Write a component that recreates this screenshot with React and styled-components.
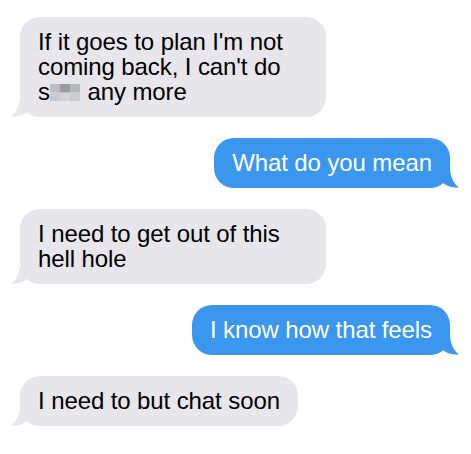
import styled, { createGlobalStyle } from "styled-components";

const GlobalStyle = createGlobalStyle`
  html, body {
    margin: 0;
    padding: 0;
    background: #ffffff;
  }
`;

const messages = [
  { id: 1, from: "them", text: ["If it goes to plan I'm not coming back, I can't do ", "censor", " any more"] },
  { id: 2, from: "me", text: ["What do you mean"] },
  { id: 3, from: "them", text: ["I need to get out of this hell hole"] },
  { id: 4, from: "me", text: ["I know how that feels"] },
  { id: 5, from: "them", text: ["I need to but chat soon"] },
];

export default function App() {
  return (
    <>
      <GlobalStyle />
      <Thread>
        {messages.map((m) => (
          <Row key={m.id} $mine={m.from === "me"}>
            <Bubble $mine={m.from === "me"}>
              {m.text.map((part, i) =>
                part === "censor" ? (
                  <Censored key={i}>
                    s<Pixelated />
                  </Censored>
                ) : (
                  <span key={i}>{part}</span>
                )
              )}
              <Tail $mine={m.from === "me"} viewBox="0 0 24 24" width="24" height="24">
                <path d="M9 2 C9 12, 6 19, 0 23.6 C6 24, 12 22.5, 16 19 L24 19 L24 2 Z" />
              </Tail>
            </Bubble>
          </Row>
        ))}
      </Thread>
    </>
  );
}

const Thread = styled.div`
  width: 471px;
  box-sizing: border-box;
  padding: 17px 21px 20px 20px;
  display: flex;
  flex-direction: column;
  gap: 21px;
  font-family: "Liberation Sans", Arial, sans-serif;
`;

const Row = styled.div`
  display: flex;
  justify-content: ${(p) => (p.$mine ? "flex-end" : "flex-start")};
`;

const Bubble = styled.div`
  position: relative;
  max-width: 306px;
  box-sizing: border-box;
  padding: 12px 18px 13px 18px;
  border-radius: 20px;
  font-size: 24px;
  line-height: 25px;
  letter-spacing: -0.1px;
  background: ${(p) => (p.$mine ? "#3b96ee" : "#e6e6eb")};
  color: ${(p) => (p.$mine ? "#ffffff" : "#000000")};
`;

const Tail = styled.svg`
  position: absolute;
  bottom: 0;
  ${(p) => (p.$mine ? "right: -9px; transform: scaleX(-1);" : "left: -9px;")}
  fill: ${(p) => (p.$mine ? "#3b96ee" : "#e6e6eb")};
  pointer-events: none;
`;

const Censored = styled.span`
  white-space: nowrap;
`;

const Pixelated = styled.span`
  display: inline-block;
  width: 30px;
  height: 17px;
  vertical-align: -1px;
  margin-right: 1px;
  background:
    linear-gradient(90deg, #b9bcc1 0 33%, #9a9ca0 33% 66%, #b5b7bb 66% 100%) top / 100% 50% no-repeat,
    linear-gradient(90deg, #c8cacd 0 33%, #d3d4d7 33% 66%, #c9cbce 66% 100%) bottom / 100% 50% no-repeat;
`;
